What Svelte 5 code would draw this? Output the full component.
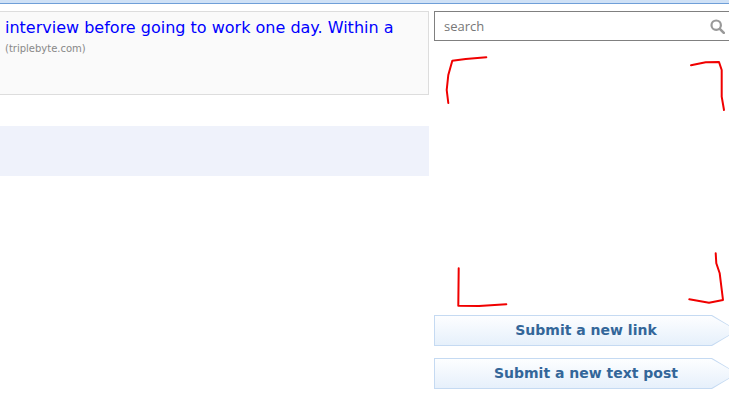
<script>
	const buttons = ['Submit a new link', 'Submit a new text post'];
</script>

<div class="page">
	<div class="topbar"></div>
	<div class="columns">
		<main class="content">
			<div class="card">
				<a class="title" href="#top">interview before going to work one day. Within a</a>
				<span class="domain">(triplebyte.com)</span>
			</div>
			<div class="band"></div>
		</main>

		<aside class="sidebar">
			<div class="search">
				<input type="text" placeholder="search" />
				<svg class="glass" width="15" height="15" viewBox="0 0 15 15">
					<circle cx="6.2" cy="6.2" r="4.7" fill="none" stroke="#999" stroke-width="2.2" />
					<path d="M9.8 9.8 L13.8 13.8" stroke="#999" stroke-width="2.6" stroke-linecap="round" />
				</svg>
			</div>

			<svg class="scribble" width="304" height="262" viewBox="434 50 304 262">
				<path d="M448.3 103 L446.7 90 L448.3 75 L452.3 60.7 L465.7 59 L486.3 57.3" />
				<path d="M691 65.3 L705.7 62.3 L719 62 L721.7 70 L721.7 96.7 L724 110" />
				<path d="M458.7 268.3 L458.3 305.7 L479 306 L506.3 304.3" />
				<path d="M715.7 253.3 L716.3 263.3 L719.7 273.3 L723 300 L709 302.7 L689.3 299.3" />
			</svg>

			<div class="actions">
				{#each buttons as label}
					<a class="submit" href="#top"><span>{label}</span></a>
				{/each}
			</div>
		</aside>
	</div>
</div>

<style>
	:global(body) {
		background: #fff;
		overflow: hidden;
	}

	.page {
		width: 729px;
		height: 401px;
		overflow: hidden;
	}

	.topbar {
		height: 3px;
		background: #cfe1f6;
		border-bottom: 1px solid #6f9fd8;
	}

	.columns {
		display: flex;
		gap: 5px;
		padding-top: 7px;
		width: 738px;
	}

	.content {
		width: 429px;
		flex: none;
	}

	.card {
		height: 84px;
		box-sizing: border-box;
		padding: 5px 0 0 5px;
		background: #fafafa;
		border: 1px solid #ddd;
		border-left: none;
	}

	.title {
		display: block;
		font: 16px/22px "DejaVu Sans", Verdana, sans-serif;
		color: #0000ff;
		text-decoration: none;
	}

	.domain {
		display: block;
		font: 10px/14px "DejaVu Sans", Verdana, sans-serif;
		color: #888;
		margin-top: 3px;
	}

	.band {
		height: 50px;
		margin-top: 31px;
		background: #eff2fb;
	}

	.sidebar {
		width: 304px;
		flex: none;
	}

	.search {
		height: 30px;
		box-sizing: border-box;
		border: 1px solid #808080;
		display: flex;
		align-items: center;
		padding: 0 12px 0 9px;
	}

	.search input {
		flex: 1;
		min-width: 0;
		border: none;
		outline: none;
		padding: 0;
		background: transparent;
		font: 13px "Open Sans", sans-serif;
	}

	.search input::placeholder {
		color: #777;
		opacity: 1;
	}

	.scribble {
		display: block;
		margin-top: 9px;
	}

	.scribble path {
		fill: none;
		stroke: #f00000;
		stroke-width: 2;
		stroke-linejoin: round;
		stroke-linecap: round;
	}

	.actions {
		display: flex;
		flex-direction: column;
		gap: 12px;
		margin-top: 3px;
	}

	.submit {
		display: block;
		height: 31px;
		background: #c5daf2;
		clip-path: polygon(0 0, 278px 0, 100% 50%, 278px 100%, 0 100%);
		text-decoration: none;
	}

	.submit span {
		display: block;
		height: 29px;
		margin: 1px;
		background: linear-gradient(#fdfeff, #e6f0fb);
		clip-path: polygon(0 0, 276.5px 0, 100% 50%, 276.5px 100%, 0 100%);
		font: bold 14px/29px "DejaVu Sans", Verdana, sans-serif;
		color: #336699;
		text-align: center;
	}
</style>
